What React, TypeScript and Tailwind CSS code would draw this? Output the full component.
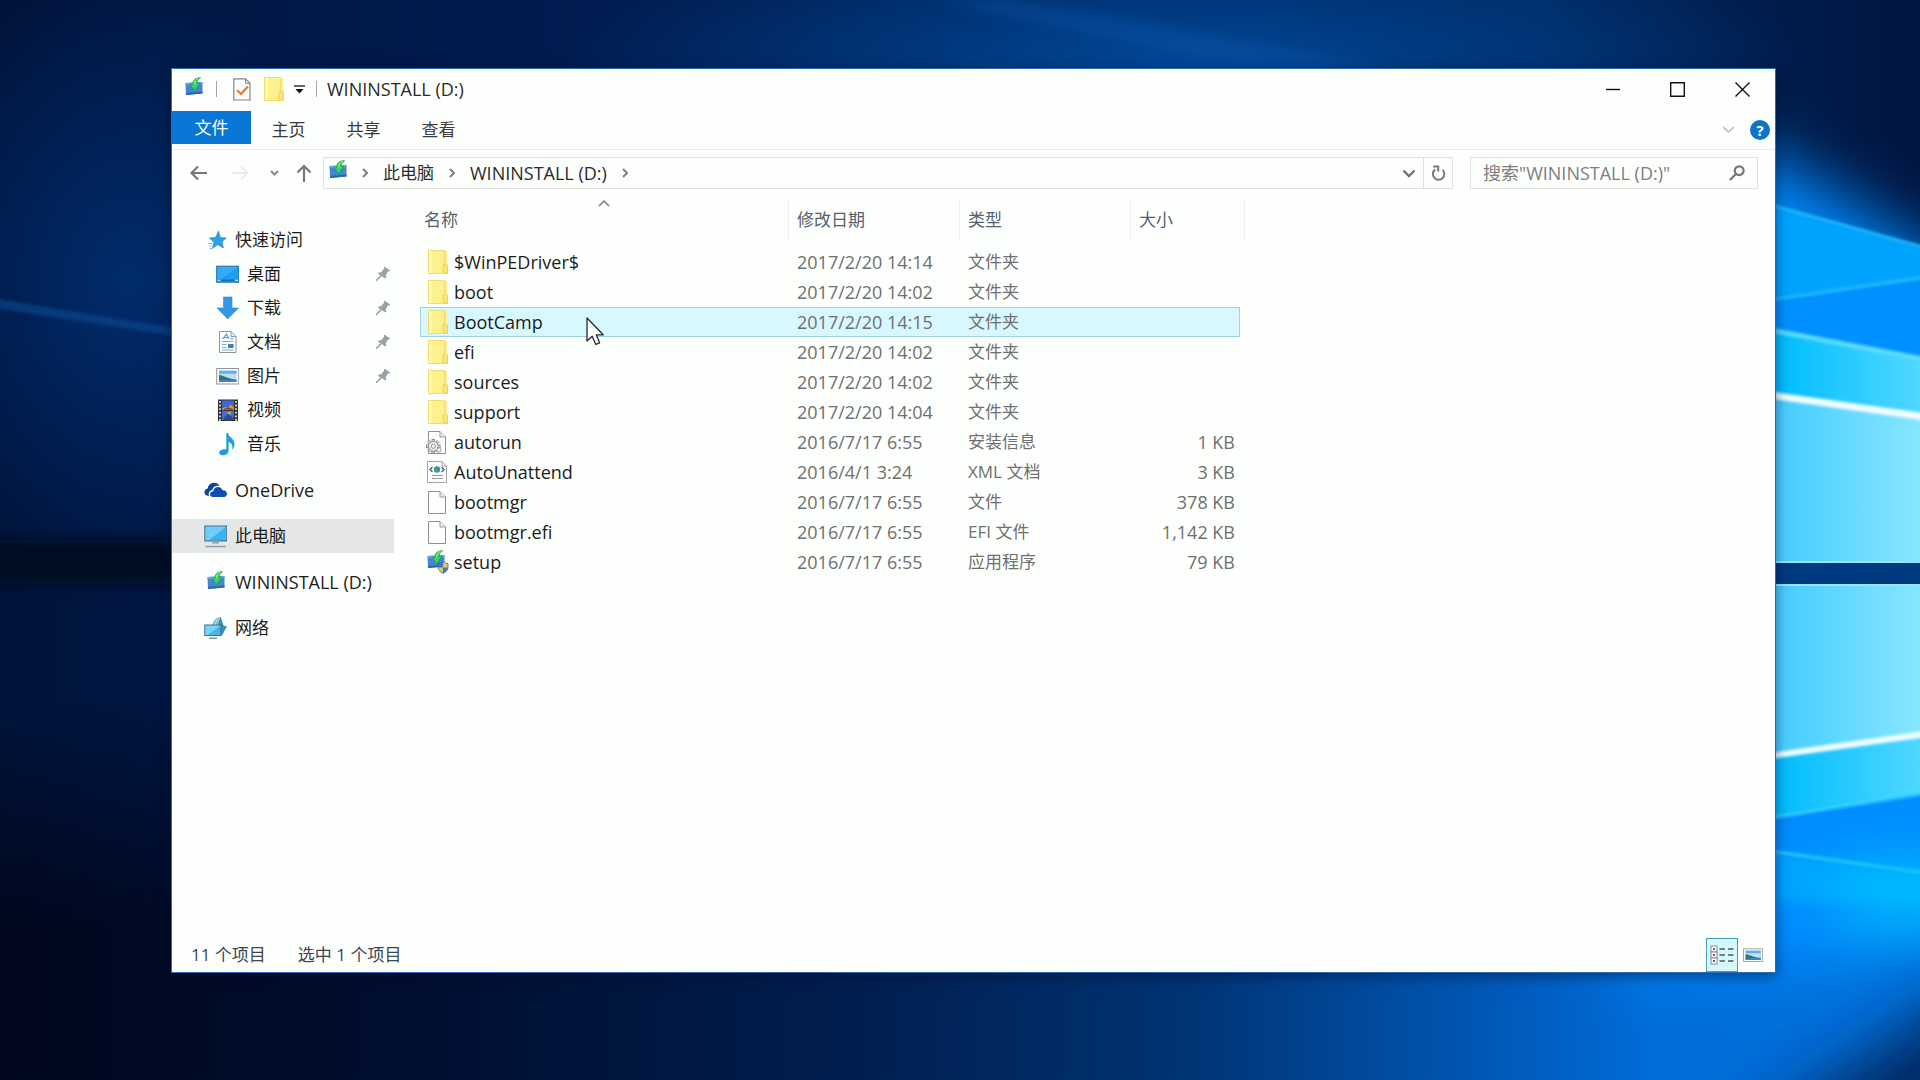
import React from 'react';

type FileKind = 'folder' | 'inf' | 'xml' | 'blank' | 'setup';

interface FileEntry {
  name: string;
  date: string;
  type: string;
  size?: string;
  kind: FileKind;
}

interface NavEntry {
  label: string;
  icon: React.ReactNode;
  pinned?: boolean;
}

interface IconProps {
  className?: string;
}

const files: FileEntry[] = [
  { name: '$WinPEDriver$', date: '2017/2/20 14:14', type: '文件夹', kind: 'folder' },
  { name: 'boot', date: '2017/2/20 14:02', type: '文件夹', kind: 'folder' },
  { name: 'BootCamp', date: '2017/2/20 14:15', type: '文件夹', kind: 'folder' },
  { name: 'efi', date: '2017/2/20 14:02', type: '文件夹', kind: 'folder' },
  { name: 'sources', date: '2017/2/20 14:02', type: '文件夹', kind: 'folder' },
  { name: 'support', date: '2017/2/20 14:04', type: '文件夹', kind: 'folder' },
  { name: 'autorun', date: '2016/7/17 6:55', type: '安装信息', size: '1 KB', kind: 'inf' },
  { name: 'AutoUnattend', date: '2016/4/1 3:24', type: 'XML 文档', size: '3 KB', kind: 'xml' },
  { name: 'bootmgr', date: '2016/7/17 6:55', type: '文件', size: '378 KB', kind: 'blank' },
  { name: 'bootmgr.efi', date: '2016/7/17 6:55', type: 'EFI 文件', size: '1,142 KB', kind: 'blank' },
  { name: 'setup', date: '2016/7/17 6:55', type: '应用程序', size: '79 KB', kind: 'setup' },
];

const SELECTED = 'BootCamp';

/* ---------- Icons ---------- */

const DriveArt = () => (
  <g>
    <path d="M0.5 6 L17.5 5 V16.5 L1 18 Z" fill="#4585d3" />
    <path d="M0.5 6 L17.5 5 V7 L0.5 8 Z" fill="#6ba4e6" />
    <path d="M1 18 L17.5 16.5 V14.5 L1 16 Z" fill="#2f62ad" />
    <path d="M15.5 0.8 C10.5 0.6 7.8 3 8 7 L5.2 7.4 L9.6 13.8 L15 6.2 L12.2 6.6 C12 4 13 2 15.5 0.8 Z" fill="#35d660" stroke="#12a544" strokeWidth="0.8" />
    <path d="M13.5 1.5 C10.5 2 9.4 4 9.6 7.4" stroke="#9af5ae" strokeWidth="1" fill="none" />
  </g>
);

const DriveIcon: React.FC<IconProps> = ({ className }) => (
  <svg width="18" height="19" viewBox="0 0 18 19" className={className} aria-hidden="true">
    <DriveArt />
  </svg>
);

const FolderIcon: React.FC<IconProps> = ({ className }) => (
  <svg width="20" height="24" viewBox="0 0 20 24" className={className} aria-hidden="true">
    <path d="M0.5 0.5 H17 V15 H19.5 V23.5 H0.5 Z" fill="#fdf08e" stroke="#f0dc71" />
    <path d="M1 1 H4 V23 H1 Z" fill="#fff6b0" />
    <path d="M17 1 H19.5 V16 H17 Z" fill="#fdf3a4" />
    <path d="M17 1 V15" stroke="#efd866" />
    <path d="M15 23 V15 Q16 13 17.5 14.5 L19.5 15 V23 Z" fill="#fbe478" stroke="#ecd050" strokeWidth="0.8" />
  </svg>
);

const PageArt = () => (
  <g>
    <path d="M3.5 1.5 H15 L20.5 7 V23.5 H3.5 Z" fill="#fefefe" stroke="#8f8f8f" />
    <path d="M15 1.5 V7 H20.5" fill="#ededed" stroke="#9a9a9a" />
  </g>
);

const GEAR_TEETH = [0, 45, 90, 135, 180, 225, 270, 315];

const FileIcon: React.FC<{ kind: FileKind }> = ({ kind }) => {
  if (kind === 'folder') {
    return <FolderIcon className="ml-[3px] mr-[6px] shrink-0" />;
  }
  return (
    <svg width="24" height="24" viewBox="0 0 24 24" className="mr-[5px] shrink-0" aria-hidden="true">
      {kind === 'blank' && <PageArt />}
      {kind === 'inf' && (
        <g>
          <PageArt />
          <g stroke="#8a8a8a" strokeWidth="0.9" fill="#e6e6e6">
            {GEAR_TEETH.map((deg) => (
              <rect key={deg} x="7" y="9.5" width="2.6" height="4" transform={`rotate(${deg} 8.3 16.3)`} />
            ))}
            <circle cx="8.3" cy="16.3" r="5" />
            <circle cx="8.3" cy="16.3" r="2" fill="#fefefe" />
          </g>
          <circle cx="14" cy="20" r="2.2" fill="#f0f0f0" stroke="#9a9a9a" strokeWidth="0.9" />
        </g>
      )}
      {kind === 'xml' && (
        <g>
          <path d="M2.5 1.5 H17 L21.5 6 V22.5 H2.5 Z" fill="#fefefe" stroke="#a5a5a5" />
          <path d="M17 1.5 V6 H21.5" fill="none" stroke="#a5a5a5" />
          <circle cx="12" cy="9.5" r="3.2" fill="#35a08f" />
          <path d="M10 8.5 Q12 6.8 14 8.5" stroke="#4a7fc4" fill="none" />
          <path d="M7.5 7 L5 9.5 L7.5 12 M16.5 7 L19 9.5 L16.5 12" stroke="#36597c" strokeWidth="1.2" fill="none" />
          <path d="M7 15.5 H18 M7 18.5 H18" stroke="#9a9a9a" />
        </g>
      )}
      {kind === 'setup' && (
        <g>
          <g transform="translate(2 0)">
            <DriveArt />
          </g>
          <path d="M18 12 C19.5 13 21 13.4 23 13.4 V17 C23 20 21 22 18 23.4 C15 22 13 20 13 17 V13.4 C15 13.4 16.5 13 18 12 Z" fill="#3c78c8" stroke="#5a6672" strokeWidth="0.8" />
          <path d="M18 12.6 C19.5 13.4 21 13.9 22.6 13.9 V17.5 H18 Z" fill="#e8c85a" />
          <path d="M13.4 17.5 H18 V22.9 C15 21.6 13.4 20 13.4 17.5 Z" fill="#e8c85a" />
        </g>
      )}
    </svg>
  );
};

const StarIcon = () => (
  <svg width="23" height="22" viewBox="0 0 23 22" aria-hidden="true">
    <path d="M14.5 2 L16.4 8.4 L22.4 8.9 L18.2 12.6 L19.4 19 L13.8 15.8 L8.4 19.4 L9.8 13.3 L5.4 9 L11.6 8.3 Z" fill="#2f9fe8" stroke="#2a86c8" strokeWidth="0.6" />
    <path d="M4.5 14.5 H8.5 M5 17 H7.5 M6 19.5 H8" stroke="#6cbcf0" />
  </svg>
);

const DesktopIcon = () => (
  <svg width="23" height="22" viewBox="0 0 23 22" aria-hidden="true">
    <rect x="0.7" y="3.2" width="22" height="16" fill="#1d9cf0" stroke="#1a6fb4" />
    <path d="M1.5 4 H22 L6 15.5 H1.5 Z" fill="#35aaf6" />
    <path d="M1.5 17.3 H4.5 M19 17.3 H22" stroke="#dff2ff" />
    <path d="M5 17.3 H18.5" stroke="#1573c0" strokeWidth="1.5" />
  </svg>
);

const DownloadIcon = () => (
  <svg width="23" height="24" viewBox="0 0 23 24" aria-hidden="true">
    <path d="M7.5 1 H16 V12 H22.5 L11.7 23 L1 12 H7.5 Z" fill="#3397e6" stroke="#2b84cf" strokeWidth="0.6" />
  </svg>
);

const DocumentIcon = () => (
  <svg width="23" height="24" viewBox="0 0 23 24" aria-hidden="true">
    <path d="M3.5 1.5 H15 L20 6.5 V22.5 H3.5 Z" fill="#fbfdfe" stroke="#8a959d" />
    <path d="M15 1.5 V6.5 H20" fill="none" stroke="#8a959d" />
    <path d="M6.5 9 L10.5 4 L13 9 M8 7.5 H12" stroke="#4aa0d8" fill="none" strokeWidth="1.2" />
    <path d="M14.5 8.8 H17.5 M6 11.5 H17.5 M6 14.5 H10.5 M6 17.5 H10.5 M6 20 H17.5" stroke="#6cb0dc" strokeWidth="1.2" />
    <rect x="12" y="14" width="5.5" height="4" fill="#3f7fae" />
  </svg>
);

const PictureArt = () => (
  <g>
    <rect x="0.7" y="3.5" width="22" height="15.5" fill="#fbfbfb" stroke="#8e989f" />
    <rect x="3" y="5.7" width="17.5" height="11" fill="#b9def6" />
    <rect x="3" y="5.7" width="17.5" height="3" fill="#69abe6" />
    <path d="M3 10 C8 10.5 12 14 20.5 14.5 V16.7 H3 Z" fill="#35766f" />
    <path d="M3 15 H20.5 V16.7 H3 Z" fill="#3f81c4" />
  </g>
);

const PictureIcon = () => (
  <svg width="23" height="22" viewBox="0 0 23 22" aria-hidden="true">
    <PictureArt />
  </svg>
);

const VideoIcon = () => (
  <svg width="23" height="24" viewBox="0 0 23 24" aria-hidden="true">
    <rect x="2" y="1.5" width="20" height="21.5" fill="#33322f" />
    <rect x="6" y="2.5" width="12" height="9.3" fill="#3c68d8" />
    <rect x="6" y="12.8" width="12" height="9.3" fill="#4272d6" />
    <path d="M6 10.6 L9 9 L12 10 L14.5 6.5 L18 9.5 V11.8 H6 Z" fill="#d99a2c" />
    <path d="M8 10.8 L13 9.4 L17 11 V11.8 H8 Z" fill="#a23a2b" />
    <path d="M7 21 L12 16 L18 20 V22.1 H7 Z" fill="#284b98" />
    <path d="M11 14.5 L15 13.5 L14 17 Z" fill="#e3b340" />
    <path d="M4 3 V23 M20 3 V23" stroke="#e4e2da" strokeWidth="1.8" strokeDasharray="1.8 1.8" />
  </svg>
);

const MusicIcon = () => (
  <svg width="23" height="24" viewBox="0 0 23 24" aria-hidden="true">
    <path d="M10.3 1 H12 C12.5 5 18.5 6.5 18.5 12 C18.5 14.5 17.5 16.5 16 18 C17.3 13.5 15.5 11 12.6 10 V18.5 C12.6 21.5 9.8 23.3 7 23.3 C4.8 23.3 3.2 22.2 3.2 20.5 C3.2 18.2 6 16.7 10.3 17.3 Z" fill="#1c9fe0" />
  </svg>
);

const OneDriveIcon = () => (
  <svg width="23" height="22" viewBox="0 0 23 22" aria-hidden="true">
    <path d="M5 17 C1.5 17 0.3 15 0.5 12.8 C0.7 10.8 2 9.8 3.8 9.6 C4 6.5 6.5 3.8 10 3.8 C12.6 3.8 14.4 5 15.6 6.8 C10.5 6.3 8.6 9 8.3 11 C5.5 11.4 4.2 14 5 17 Z" fill="#0f4796" />
    <path d="M9 18 C6.8 18 5.9 16.5 6.1 14.8 C6.3 13.2 7.5 12.2 9.3 12.2 C9.5 9.6 11.5 7.9 14 7.9 C16.3 7.9 17.9 9.2 18.5 11.2 C21.2 11.1 23 12.6 23 14.8 C23 16.8 21.7 18 19.8 18 Z" fill="#0f4db4" />
  </svg>
);

const ComputerIcon = () => (
  <svg width="23" height="24" viewBox="0 0 23 24" aria-hidden="true">
    <rect x="0.8" y="2" width="22" height="15" fill="#3cb4f0" stroke="#4c7186" />
    <path d="M1.5 2.7 H22 L5 16.3 H1.5 Z" fill="#6fcdf8" />
    <path d="M8 18.8 H15" stroke="#8fa1ab" strokeWidth="1.4" />
    <path d="M1.5 22.5 H22" stroke="#8c9ba4" strokeWidth="1.5" />
  </svg>
);

const NetworkIcon = () => (
  <svg width="23" height="24" viewBox="0 0 23 24" aria-hidden="true">
    <path d="M8.5 9 C9 4.5 12 1.5 16.5 1 L19.5 10 V18 H9 Z" fill="#86bcd6" />
    <path d="M16.5 0.5 L19.5 9.5 L23 10.5 L17.5 20 L13 12 Z" fill="#3d8cb8" />
    <path d="M15 2.5 C12 4.5 11 7 11.5 10" stroke="#c6e4f0" fill="none" />
    <rect x="0.8" y="9" width="16" height="10.5" fill="#44b6ee" stroke="#41718c" />
    <path d="M1.5 9.7 H16 L4 19 H1.5 Z" fill="#7ad2f9" />
    <path d="M5 22.3 H13" stroke="#7f939e" strokeWidth="1.5" />
  </svg>
);

const PinIcon = () => (
  <svg width="16" height="16" viewBox="0 0 16 16" aria-hidden="true">
    <path d="M9.8 0.8 L15.2 4.4 L14.4 5.6 L13.2 5.2 L10.6 9.2 L11.4 11.6 L10.4 12.6 L3 7.8 L3.6 6.4 L6.2 6.2 L9.2 2.6 L8.8 1.6 Z" fill="#98a0a8" />
    <path d="M6.2 9.6 L1 14.8" stroke="#98a0a8" strokeWidth="1.6" />
  </svg>
);

const CheckDocIcon = () => (
  <svg width="18" height="23" viewBox="0 0 18 23" aria-hidden="true">
    <path d="M0.8 0.8 H12.5 L17 5.3 V22 H0.8 Z" fill="#fdfcfa" stroke="#83858a" strokeWidth="1.2" />
    <path d="M12.5 0.8 V5.3 H17" fill="none" stroke="#83858a" />
    <path d="M4 12.2 L8 16 L15 8.5" stroke="#e07a35" strokeWidth="2.2" fill="none" />
  </svg>
);

interface ChevronProps {
  d: string;
  w: number;
  h: number;
  stroke?: string;
  weight?: number;
}

const Chevron: React.FC<ChevronProps> = ({ d, w, h, stroke = '#6d6d6d', weight = 2 }) => (
  <svg width={w} height={h} viewBox={`0 0 ${w} ${h}`} className="shrink-0" fill="none" stroke={stroke} strokeWidth={weight} aria-hidden="true">
    <path d={d} />
  </svg>
);

const CrumbArrow = () => <Chevron d="M1 1 L5 5 L1 9" w={6} h={10} stroke="#808080" />;

const CursorIcon = () => (
  <svg width="19" height="29" viewBox="0 0 19 29" className="absolute left-[165px] top-[9px] z-10" aria-hidden="true">
    <path d="M1 1 V24 L6.2 19.2 L9.8 27.4 L13.6 25.8 L10.2 17.8 H17.2 Z" fill="#fdfefe" stroke="#25292d" strokeWidth="1.3" strokeLinejoin="round" />
  </svg>
);

/* ---------- Desktop ---------- */

const Wallpaper = () => (
  <svg className="absolute inset-0 h-full w-full" viewBox="0 0 1920 1080" preserveAspectRatio="none" aria-hidden="true">
    <defs>
      <linearGradient id="base" x1="0" y1="0" x2="1" y2="0">
        <stop offset="0" stopColor="#00143c" />
        <stop offset="0.3" stopColor="#001c50" />
        <stop offset="0.8" stopColor="#002860" />
        <stop offset="1" stopColor="#00153f" />
      </linearGradient>
      <linearGradient id="floor" x1="0" y1="0" x2="1" y2="0">
        <stop offset="0" stopColor="#00071c" />
        <stop offset="0.25" stopColor="#001034" />
        <stop offset="0.45" stopColor="#001f50" />
        <stop offset="0.62" stopColor="#003474" />
        <stop offset="0.74" stopColor="#0050a8" />
        <stop offset="0.86" stopColor="#006cd8" />
        <stop offset="1" stopColor="#0070d8" />
      </linearGradient>
      <linearGradient id="floorFade" x1="0" y1="0" x2="0" y2="1">
        <stop offset="0" stopColor="#000" />
        <stop offset="1" stopColor="#fff" />
      </linearGradient>
      <mask id="floorMask">
        <rect y="700" width="1920" height="230" fill="url(#floorFade)" />
        <rect y="930" width="1920" height="150" fill="#fff" />
      </mask>
      <radialGradient id="topGlow">
        <stop offset="0" stopColor="#004796" />
        <stop offset="1" stopColor="#004796" stopOpacity="0" />
      </radialGradient>
      <radialGradient id="leftGlow">
        <stop offset="0" stopColor="#002c6c" />
        <stop offset="1" stopColor="#002c6c" stopOpacity="0" />
      </radialGradient>
      <linearGradient id="pane" x1="0" y1="0" x2="1" y2="0">
        <stop offset="0" stopColor="#46ccff" />
        <stop offset="1" stopColor="#86e6ff" />
      </linearGradient>
      <linearGradient id="beam" x1="0" y1="0" x2="1" y2="0">
        <stop offset="0" stopColor="#00bcff" />
        <stop offset="1" stopColor="#50d8ff" />
      </linearGradient>
      <filter id="soft" filterUnits="userSpaceOnUse" x="-300" y="-300" width="2600" height="1700">
        <feGaussianBlur stdDeviation="32" />
      </filter>
      <filter id="edge" filterUnits="userSpaceOnUse" x="-100" y="-100" width="2200" height="1300">
        <feGaussianBlur stdDeviation="1.5" />
      </filter>
      <filter id="band" filterUnits="userSpaceOnUse" x="-100" y="-100" width="2200" height="1300">
        <feGaussianBlur stdDeviation="6" />
      </filter>
    </defs>
    <rect width="1920" height="1080" fill="url(#base)" />
    <ellipse cx="1180" cy="60" rx="620" ry="130" fill="url(#topGlow)" />
    <ellipse cx="130" cy="280" rx="240" ry="300" fill="url(#leftGlow)" />
    <path d="M930 0 H1010 L1400 68 H1250 Z" fill="#0a58ae" opacity="0.35" filter="url(#band)" />
    <path d="M-20 296 L200 332 V340 L-20 306 Z" fill="#07488e" opacity="0.6" filter="url(#edge)" />
    <rect width="1920" height="1080" fill="url(#floor)" mask="url(#floorMask)" />
    <rect x="-40" y="540" width="240" height="44" fill="#000822" filter="url(#band)" />

    {/* light coming through the window logo */}
    <path d="M1620 150 H1760 L1990 290 V930 L1800 970 H1620 Z" fill="#008cff" filter="url(#soft)" />
    <path d="M1776 207 L1940 252 V900 H1776 Z" fill="#0090ff" filter="url(#edge)" />
    <path d="M1776 210 L1940 254 V276 L1776 298 Z" fill="#05a4ff" filter="url(#edge)" />
    <path d="M1776 331 L1920 358 V416 L1776 396 Z" fill="url(#beam)" />
    <path d="M1776 396 L1920 416 V563 H1776 Z" fill="url(#pane)" />
    <path d="M1776 584 H1920 V735 L1776 755 Z" fill="url(#pane)" />
    <path d="M1776 755 L1920 735 V794 L1776 817 Z" fill="url(#beam)" />
    <path d="M1776 817 L1920 794 V872 L1776 852 Z" fill="#008cff" />
    <path d="M1776 852 L1940 875 V900 H1776 Z" fill="#00a2ff" filter="url(#band)" />
    <rect x="1776" y="563" width="144" height="21" fill="#003a80" />
    <path d="M1776 562 H1920 M1776 585 H1920" stroke="#9be6ff" strokeWidth="2" />
    <g fill="none" filter="url(#edge)">
      <path d="M1770 205 L1940 252" stroke="#1fc0ff" strokeWidth="3" />
      <path d="M1770 300 L1940 275" stroke="#22bdff" strokeWidth="3" />
      <path d="M1770 330 L1940 362" stroke="#5cdcff" strokeWidth="5" />
      <path d="M1770 395 L1940 419" stroke="#f2feff" strokeWidth="7" />
      <path d="M1770 756 L1940 732" stroke="#f2feff" strokeWidth="6" />
      <path d="M1770 818 L1940 791" stroke="#30d0ff" strokeWidth="3" />
      <path d="M1770 851 L1940 875" stroke="#45d8ff" strokeWidth="2" />
    </g>
    <ellipse cx="1910" cy="895" rx="90" ry="30" fill="#00c4ff" filter="url(#soft)" />
    <path d="M2060 930 L1730 1150 H2060 Z" fill="#00265e" filter="url(#soft)" />
  </svg>
);

/* ---------- Window parts ---------- */

const TitleBar = () => (
  <header className="flex h-[42px] items-center pb-[2px]">
    <DriveIcon className="mb-[6px] ml-[13px]" />
    <span className="ml-[13px] h-4 w-px bg-[#a3a3a3]" />
    <button type="button" aria-label="属性" className="ml-4">
      <CheckDocIcon />
    </button>
    <button type="button" aria-label="新建文件夹" className="ml-[13px]">
      <FolderIcon />
    </button>
    <button type="button" aria-label="自定义快速访问工具栏" className="ml-[10px]">
      <svg width="11" height="9" viewBox="0 0 11 9" aria-hidden="true">
        <path d="M0 1 H11" stroke="#222" strokeWidth="1.4" />
        <path d="M1.5 4 H9.5 L5.5 8.5 Z" fill="#111" />
      </svg>
    </button>
    <span className="ml-[11px] h-4 w-px bg-[#a3a3a3]" />
    <h1 className="ml-[10px] text-[18px] leading-6 text-[#2a2a2a]">WININSTALL (D:)</h1>
    <div className="ml-auto flex h-full">
      <button type="button" aria-label="最小化" className="flex w-[65px] items-center justify-center">
        <Chevron d="M0 7.5 H14" w={14} h={14} stroke="#111" weight={1.4} />
      </button>
      <button type="button" aria-label="最大化" className="flex w-[65px] items-center justify-center">
        <Chevron d="M0.7 0.7 H14.3 V14.3 H0.7 Z" w={15} h={15} stroke="#111" weight={1.4} />
      </button>
      <button type="button" aria-label="关闭" className="flex w-[65px] items-center justify-center">
        <Chevron d="M0.5 0.5 L14.5 14.5 M14.5 0.5 L0.5 14.5" w={15} h={15} stroke="#111" weight={1.4} />
      </button>
    </div>
  </header>
);

const RibbonTabs = () => (
  <nav className="flex h-[39px] items-start border-b border-[#e9ebea] text-[17px] leading-[33px]">
    <button type="button" className="h-[33px] w-[79px] bg-[#0a76d6] text-white">文件</button>
    {['主页', '共享', '查看'].map((tab) => (
      <button key={tab} type="button" className="h-9 w-[75px] text-[#3c3c3c]">
        {tab}
      </button>
    ))}
    <div className="ml-auto flex h-[38px] items-center gap-[15px] pr-[5px]">
      <button type="button" aria-label="展开功能区">
        <Chevron d="M1 1 L6.5 6 L12 1" w={13} h={8} stroke="#b4b8ba" weight={1.6} />
      </button>
      <button
        type="button"
        aria-label="帮助"
        className="flex size-5 items-center justify-center rounded-full bg-[#0f74c8] text-[15px] font-bold leading-5 text-white"
      >
        ?
      </button>
    </div>
  </nav>
);

const AddressRow = () => (
  <div className="flex pb-px pl-1 pr-[17px] pt-[7px]">
    <button type="button" aria-label="后退" className="flex w-11 items-center justify-center">
      <Chevron d="M8 1.5 L1.5 8 L8 14.5 M1.5 8 H17" w={17} h={16} stroke="#767676" weight={2.2} />
    </button>
    <button type="button" aria-label="前进" className="flex w-10 items-center justify-center">
      <Chevron d="M9 1.5 L15.5 8 L9 14.5 M15.5 8 H0" w={17} h={16} stroke="#eaecec" />
    </button>
    <button type="button" aria-label="最近的位置" className="flex w-7 items-center justify-center">
      <Chevron d="M1 1 L4.5 4.5 L8 1" w={9} h={6} stroke="#8a8a8a" />
    </button>
    <button type="button" aria-label="上移" className="mr-[3px] flex w-8 items-center justify-center">
      <Chevron d="M1.5 8.5 L8 2 L14.5 8.5 M8 2 V18" w={16} h={18} stroke="#767676" weight={2.2} />
    </button>

    <div className="flex h-8 min-w-0 flex-1 items-center border border-[#e0e2e1] text-[#2a2a2a]">
      <div className="flex flex-1 items-center gap-[15px] pl-[5px]">
        <DriveIcon className="mb-2" />
        <CrumbArrow />
        <button type="button" className="text-[17px] leading-6">此电脑</button>
        <CrumbArrow />
        <button type="button" className="text-[18px] leading-6">WININSTALL (D:)</button>
        <CrumbArrow />
      </div>
      <button type="button" aria-label="以前的位置" className="flex h-full w-7 items-center justify-center">
        <Chevron d="M1.5 1.5 L7 7 L12.5 1.5" w={14} h={9} stroke="#737373" weight={2.4} />
      </button>
      <button type="button" aria-label="刷新" className="flex h-full w-[29px] items-center justify-center border-l border-[#e0e2e1]">
        <Chevron d="M11.6 4.9 A5.7 5.7 0 1 1 4.2 4.4 M2.2 1.4 H7.2 V6.6" w={15} h={16} stroke="#7a7a7a" weight={2} />
      </button>
    </div>

    <div className="ml-[17px] flex h-8 w-[288px] items-center border border-[#e0e2e1] pl-3 pr-3">
      <input
        type="search"
        aria-label="搜索"
        placeholder={'搜索"WININSTALL (D:)"'}
        className="min-w-0 flex-1 bg-transparent text-[18px] leading-6 outline-none placeholder:text-[#7d7d7d]"
      />
      <Chevron d="M14.6 5.7 A4.4 4.4 0 1 1 5.8 5.7 A4.4 4.4 0 1 1 14.6 5.7 Z M7 9 L0.8 15" w={16} h={16} stroke="#757575" weight={2.2} />
    </div>
  </div>
);

const quickAccess: NavEntry[] = [
  { label: '桌面', icon: <DesktopIcon />, pinned: true },
  { label: '下载', icon: <DownloadIcon />, pinned: true },
  { label: '文档', icon: <DocumentIcon />, pinned: true },
  { label: '图片', icon: <PictureIcon />, pinned: true },
  { label: '视频', icon: <VideoIcon /> },
  { label: '音乐', icon: <MusicIcon /> },
];

const Sidebar = () => (
  <aside className="w-[222px] shrink-0 pt-[33px] text-[17px] text-[#1c1c1c]">
    <button type="button" className="flex h-[34px] w-full items-center gap-2 pl-8">
      <StarIcon />
      快速访问
    </button>
    {quickAccess.map((item) => (
      <button key={item.label} type="button" className="flex h-[34px] w-full items-center gap-2 pl-[44px] pr-[3px]">
        {item.icon}
        {item.label}
        {item.pinned && (
          <span className="ml-auto">
            <PinIcon />
          </span>
        )}
      </button>
    ))}
    <div className="flex flex-col gap-3 pt-3">
      <button type="button" className="flex h-[34px] items-center gap-2 pl-8 text-[18px]">
        <OneDriveIcon />
        OneDrive
      </button>
      <button type="button" className="flex h-[34px] items-center gap-2 bg-[#e5e7e6] pl-8">
        <ComputerIcon />
        此电脑
      </button>
      <button type="button" className="flex h-[34px] items-center gap-2 pl-8 text-[18px]">
        <span className="flex w-[23px] justify-center pb-1">
          <DriveIcon />
        </span>
        WININSTALL (D:)
      </button>
      <button type="button" className="flex h-[34px] items-center gap-2 pl-8">
        <NetworkIcon />
        网络
      </button>
    </div>
  </aside>
);

interface HeaderCellProps {
  label: string;
  sorted?: boolean;
  span?: number;
}

const HeaderCell: React.FC<HeaderCellProps> = ({ label, sorted, span }) => (
  <th colSpan={span} className="h-[47px] p-0 align-top font-normal">
    <div className={`relative flex h-10 items-center border-r border-[#f0f2f2] ${sorted ? 'pl-1' : 'pl-2'}`}>
      {sorted && (
        <span className="absolute inset-x-0 top-0 flex justify-center">
          <Chevron d="M1 6 L6 1 L11 6" w={12} h={7} stroke="#7d7d7d" weight={1.5} />
        </span>
      )}
      {label}
    </div>
  </th>
);

const FileTable = () => (
  <table className="ml-[26px] mt-[10px] w-[825px] table-fixed border-separate border-spacing-0 self-start text-left">
    <colgroup>
      <col className="w-[369px]" />
      <col className="w-[171px]" />
      <col className="w-[171px]" />
      <col />
      <col className="w-[5px]" />
    </colgroup>
    <thead className="text-[17px] text-[#55616e]">
      <tr>
        <HeaderCell label="名称" sorted />
        <HeaderCell label="修改日期" />
        <HeaderCell label="类型" />
        <HeaderCell label="大小" span={2} />
      </tr>
    </thead>
    <tbody className="text-[18px] leading-7 text-[#6f6f6f]">
      {files.map((file) => {
        const selected = file.name === SELECTED;
        const cell = selected ? 'h-[30px] border-y border-[#9fd3e2] bg-[#d8f8ff] p-0' : 'h-[30px] p-0';
        return (
          <tr key={file.name}>
            <td className={`${cell} relative ${selected ? 'border-l' : ''}`}>
              <div className={`flex items-center text-[#1c1c1c] ${selected ? 'pl-1' : 'pl-[5px]'}`}>
                <FileIcon kind={file.kind} />
                {file.name}
              </div>
              {selected && <CursorIcon />}
            </td>
            <td className={cell}>
              <div className="pl-2">{file.date}</div>
            </td>
            <td className={cell}>
              <div className="pl-2 text-[17px]">{file.type}</div>
            </td>
            <td className={`${cell} ${selected ? 'border-r' : ''}`}>
              <div className={`text-right ${selected ? 'pr-1' : 'pr-[5px]'}`}>{file.size}</div>
            </td>
            <td className="p-0" />
          </tr>
        );
      })}
    </tbody>
  </table>
);

const StatusBar = () => (
  <footer className="flex h-[34px] items-center pl-[19px] pr-3 text-[17px] text-[#3a4652]">
    <span>11 个项目</span>
    <span className="ml-8">选中 1 个项目</span>
    <div className="ml-auto flex items-center gap-[5px]">
      <button type="button" aria-label="详细信息" className="flex h-[34px] w-8 items-center justify-center border border-[#3fa3b5] bg-[#d3f7fc]">
        <svg width="24" height="20" viewBox="0 0 24 20" aria-hidden="true">
          <g fill="#fff" stroke="#8a8a8a">
            <rect x="1" y="1" width="6" height="6" />
            <rect x="1" y="7" width="6" height="6" />
            <rect x="1" y="13" width="6" height="6" />
          </g>
          <path d="M3 4 H5 M3 10 H5 M3 16 H5" stroke="#333" strokeWidth="1.5" />
          <path d="M9.5 4 H15 M18 4 H23.5 M9.5 10 H15 M18 10 H23.5 M9.5 16 H15 M18 16 H23.5" stroke="#555" strokeWidth="1.4" />
        </svg>
      </button>
      <button type="button" aria-label="大缩略图">
        <svg width="20" height="18" viewBox="0 0 23 22" preserveAspectRatio="none" aria-hidden="true">
          <PictureArt />
        </svg>
      </button>
    </div>
  </footer>
);

export default function App() {
  return (
    <div className="relative flex min-h-screen overflow-hidden bg-[#001238] pb-[107px] pl-[171px] pr-[144px] pt-[68px] font-['Open_Sans','Noto_Sans_CJK_SC',sans-serif]">
      <Wallpaper />
      <main className="relative flex min-w-0 flex-1 flex-col border border-[#2b6cb4] bg-[#fdfffd] shadow-[0_3px_12px_rgba(0,10,40,0.5)]">
        <TitleBar />
        <RibbonTabs />
        <AddressRow />
        <div className="flex flex-1">
          <Sidebar />
          <FileTable />
        </div>
        <StatusBar />
      </main>
    </div>
  );
}
